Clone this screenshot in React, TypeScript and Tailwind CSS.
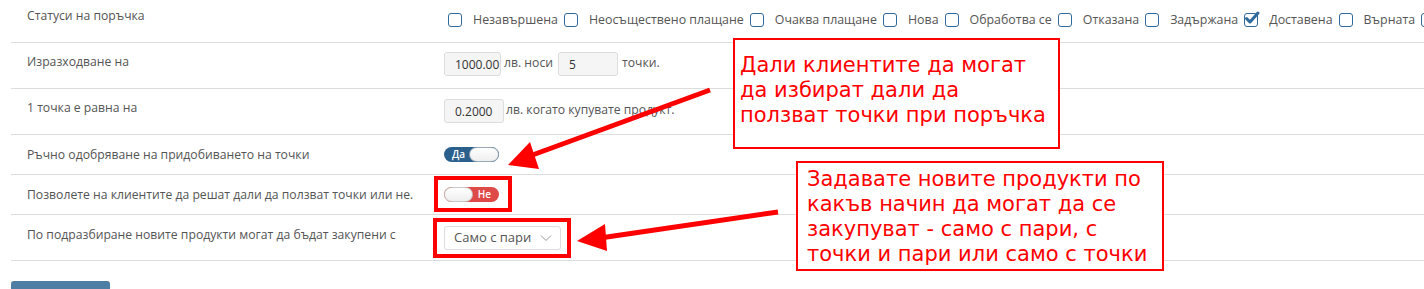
import React from "react";

const statuses = [
  { name: "Незавършена", checked: false },
  { name: "Неосъществено плащане", checked: false },
  { name: "Очаква плащане", checked: false },
  { name: "Нова", checked: false },
  { name: "Обработва се", checked: false },
  { name: "Отказана", checked: false },
  { name: "Задържана", checked: false },
  { name: "Доставена", checked: true },
  { name: "Върната", checked: false },
  { name: "Изпратена", checked: false },
];

function Checkbox({ checked }: { checked: boolean }) {
  return (
    <span className="relative inline-block w-[14px] h-[14px] shrink-0 rounded-[3px] border-[1.5px] border-[#2f6a9c] bg-white">
      {checked && (
        <svg className="absolute -left-[1px] -top-[4px]" width="16" height="16" viewBox="0 0 16 16">
          <path d="M2.5 8.5 L6 12 L14 3" fill="none" stroke="#2f6a9c" strokeWidth="3" strokeLinecap="round" strokeLinejoin="round" />
        </svg>
      )}
    </span>
  );
}

function Row({ label, children, h, pt, cpt }: { label: string; children: React.ReactNode; h: string; pt: string; cpt: string }) {
  return (
    <div className={`flex border-b border-[#dddddd] ${h}`}>
      <div className={`w-[433px] shrink-0 pl-[16px] text-[12.2px] leading-[17px] text-[#555555] ${pt}`}>{label}</div>
      <div className={`flex-1 min-w-0 ${cpt}`}>{children}</div>
    </div>
  );
}

function SmallInput({ value, w }: { value: string; w: string }) {
  return (
    <div className={`h-[24px] ${w} shrink-0 overflow-hidden whitespace-nowrap rounded-[3px] border border-[#dddddd] bg-[#f5f5f5] pl-[10px] text-[12px] leading-[24px] text-[#333333]`}>
      {value}
    </div>
  );
}

export default function App() {
  return (
    <div className="relative w-[1424px] h-[289px] overflow-hidden bg-white" style={{ fontFamily: '"Open Sans", "Liberation Sans", sans-serif' }}>
      <div className="ml-[11px]">
        <Row label="Статуси на поръчка" h="h-[43px]" pt="pt-[7px]" cpt="pt-[11px]">
          <div className="flex items-center whitespace-nowrap pl-[4px] text-[12.4px] leading-[17px] text-[#555555]">
            {statuses.map((s) => (
              <span key={s.name} className="flex items-center shrink-0">
                <Checkbox checked={s.checked} />
                <span className="ml-[11px] mr-[6px]">{s.name}</span>
              </span>
            ))}
          </div>
        </Row>

        <Row label="Изразходване на" h="h-[46px]" pt="pt-[10px]" cpt="pt-[9px]">
          <div className="flex items-start text-[12.2px] leading-[17px] text-[#555555]">
            <SmallInput value="1000.00" w="w-[57px]" />
            <span className="ml-[3px] mr-[5px] pt-[2px]">лв. носи</span>
            <SmallInput value="5" w="w-[60px]" />
            <span className="ml-[4px] pt-[2px]">точки.</span>
          </div>
        </Row>

        <Row label="1 точка е равна на" h="h-[46px]" pt="pt-[10px]" cpt="pt-[10px]">
          <div className="flex items-start text-[12.2px] leading-[17px] text-[#555555]">
            <SmallInput value="0.2000" w="w-[60px]" />
            <span className="ml-[2px] pt-[2px]">лв. когато купувате продукт.</span>
          </div>
        </Row>

        <Row label="Ръчно одобряване на придобиването на точки" h="h-[40px]" pt="pt-[11px]" cpt="pt-[12px]">
          <div className="relative h-[15px] w-[55px] rounded-full bg-[#2b5f8c]">
            <span className="absolute left-[8px] top-0 text-[10px] font-semibold leading-[15px] text-white">Да</span>
            <span className="absolute right-0 top-0 h-[15px] w-[30px] rounded-full border border-[#9aa9b8] bg-gradient-to-b from-white to-[#eeeeee]" />
          </div>
        </Row>

        <Row label="Позволете на клиентите да решат дали да ползват точки или не." h="h-[40px]" pt="pt-[11px]" cpt="pt-[12px]">
          <div className="relative h-[15px] w-[55px] rounded-full bg-[#dd4a48]">
            <span className="absolute left-0 top-0 h-[15px] w-[29px] rounded-full border border-[#c9c9c9] bg-gradient-to-b from-white to-[#eeeeee]" />
            <span className="absolute right-[8px] top-0 text-[10px] font-semibold leading-[15px] text-white">Не</span>
          </div>
        </Row>

        <Row label="По подразбиране новите продукти могат да бъдат закупени с" h="h-[46px]" pt="pt-[11px]" cpt="pt-[11px]">
          <div className="flex h-[24px] w-[117px] items-center justify-between rounded-[3px] border border-[#dddddd] bg-white pl-[9px] pr-[8px] text-[13px] text-[#555555]">
            <span>Само с пари</span>
            <svg width="12" height="8" viewBox="0 0 12 8">
              <path d="M1 1.5 L6 6.5 L11 1.5" fill="none" stroke="#999999" strokeWidth="1" />
            </svg>
          </div>
        </Row>

        <div className="mt-[20px] h-[30px] w-[99px] rounded-[3px] bg-[#4f7ea4]" />
      </div>

      {/* highlight boxes */}
      <div className="absolute left-[434px] top-[176px] h-[36px] w-[78px] border-[4px] border-[#ff0000]" />
      <div className="absolute left-[433px] top-[218px] h-[40px] w-[138px] border-[4px] border-[#ff0000]" />

      {/* arrows */}
      <svg className="absolute left-0 top-0 pointer-events-none" width="1424" height="289" viewBox="0 0 1424 289">
        <line x1="710" y1="90" x2="527" y2="157" stroke="#ff0000" strokeWidth="5" />
        <polygon points="508,165 530,142 539,169" fill="#ff0000" />
        <line x1="778" y1="212" x2="600" y2="238" stroke="#ff0000" strokeWidth="5" />
        <polygon points="577,241 605,224 607,251" fill="#ff0000" />
      </svg>

      {/* callouts */}
      <div className="absolute left-[733px] top-[38px] h-[111px] w-[327px] border-2 border-[#ff0000] bg-white pl-[5px] pt-[13px] text-[21px] leading-[25px] text-[#ff0000]" style={{ fontFamily: '"DejaVu Sans", sans-serif' }}>
        <div>Дали клиентите да могат</div>
        <div>да избират дали да</div>
        <div>ползват точки при поръчка</div>
      </div>
      <div className="absolute left-[796px] top-[161px] h-[110px] w-[368px] border-2 border-[#ff0000] bg-white pl-[9px] pt-[4px] text-[21px] leading-[25px] text-[#ff0000]" style={{ fontFamily: '"DejaVu Sans", sans-serif' }}>
        <div>Задавате новите продукти по</div>
        <div>какъв начин да могат да се</div>
        <div>закупуват - само с пари, с</div>
        <div>точки и пари или само с точки</div>
      </div>
    </div>
  );
}
